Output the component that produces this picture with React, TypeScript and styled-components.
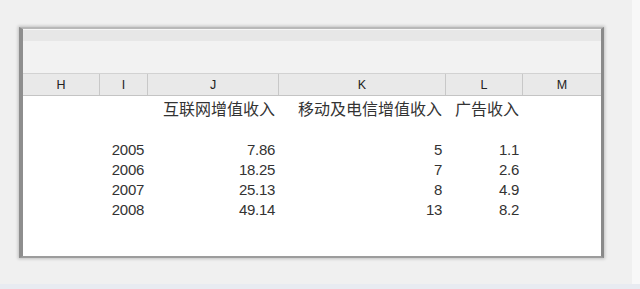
import styled, { createGlobalStyle } from 'styled-components'

const GlobalStyle = createGlobalStyle`
  html, body {
    margin: 0;
    padding: 0;
    background: #f8f8f8;
  }
  body {
    width: 640px;
    height: 289px;
    overflow: hidden;
    font-family: 'Liberation Sans', Arial, sans-serif;
  }
`

const Frame = styled.div`
  width: 632px;
  height: 284px;
  background: #f0f0f0;
  padding: 27px 0 0 19px;
  box-sizing: border-box;
`

const BottomStrip = styled.div`
  width: 640px;
  height: 5px;
  background: #e8ebf1;
`

const Panel = styled.div`
  width: 585px;
  height: 231px;
  box-sizing: border-box;
  border-left: 4px solid #8e8e8e;
  border-right: 3px solid #8a8a8a;
  border-top: 2px solid #b8b8b8;
  border-bottom: 2px solid #9c9c9c;
  box-shadow: 0 0 3px 1px rgba(0, 0, 0, 0.2);
  background: #fff;
  display: flex;
  flex-direction: column;
`

const TopStrip = styled.div`
  height: 12px;
  background: #e7e7e7;
  border-top: 1px solid #f6f6f6;
  box-sizing: border-box;
`

const Toolbar = styled.div`
  height: 32px;
  background: #f2f2f2;
`

const columns = '77px 48px 131px 167px 77px 78px'

const HeaderRow = styled.div`
  display: grid;
  grid-template-columns: ${columns};
  height: 23px;
  box-sizing: border-box;
  border-top: 1px solid #d2d2d2;
  border-bottom: 1px solid #c4c4c4;
  background: #e9e9e9;
`

const HeaderCell = styled.div`
  display: flex;
  align-items: center;
  justify-content: center;
  font-size: 12.5px;
  color: #222;
  border-right: 1px solid #c8c8c8;
  &:last-child {
    border-right: none;
  }
`

const Body = styled.div`
  flex: 1;
  background: #fff;
`

const Row = styled.div<{ $h: number }>`
  display: grid;
  grid-template-columns: ${columns};
  height: ${(p) => p.$h}px;
`

const Cell = styled.div<{ $cjk?: boolean }>`
  display: flex;
  align-items: center;
  justify-content: flex-end;
  padding-right: 4px;
  white-space: nowrap;
  color: #333;
  font-size: ${(p) => (p.$cjk ? '16px' : '15px')};
  font-family: ${(p) =>
    p.$cjk
      ? "'Noto Sans CJK SC', 'Liberation Sans', sans-serif"
      : "'Liberation Sans', Arial, sans-serif"};
  letter-spacing: ${(p) => (p.$cjk ? '0' : '-0.3px')};
`

const letters = ['H', 'I', 'J', 'K', 'L', 'M']

const data: [string, string, string, string][] = [
  ['2005', '7.86', '5', '1.1'],
  ['2006', '18.25', '7', '2.6'],
  ['2007', '25.13', '8', '4.9'],
  ['2008', '49.14', '13', '8.2'],
]

export default function App() {
  return (
    <>
      <GlobalStyle />
      <Frame>
        <Panel>
          <TopStrip />
          <Toolbar />
          <HeaderRow>
            {letters.map((l) => (
              <HeaderCell key={l}>{l}</HeaderCell>
            ))}
          </HeaderRow>
          <Body>
            <Row $h={22}>
              <Cell />
              <Cell />
              <Cell $cjk>互联网增值收入</Cell>
              <Cell $cjk>移动及电信增值收入</Cell>
              <Cell $cjk>广告收入</Cell>
              <Cell />
            </Row>
            <Row $h={21} />
            {data.map(([year, net, mobile, ad]) => (
              <Row $h={20} key={year}>
                <Cell />
                <Cell>{year}</Cell>
                <Cell>{net}</Cell>
                <Cell>{mobile}</Cell>
                <Cell>{ad}</Cell>
                <Cell />
              </Row>
            ))}
          </Body>
        </Panel>
      </Frame>
      <BottomStrip />
    </>
  )
}
